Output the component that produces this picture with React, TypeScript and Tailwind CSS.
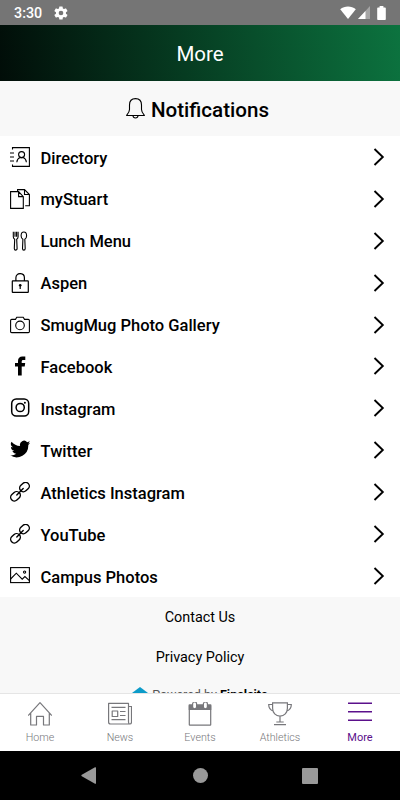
import React from 'react';

interface MenuItem {
  label: string;
  icon: React.ReactNode;
}

interface TabItem {
  label: string;
  icon: React.ReactNode;
  active?: boolean;
}

const LinkIcon = () => (
  <svg className="w-5 h-5" viewBox="0 0 20 20" fill="none" stroke="currentColor" strokeWidth={1.4} strokeLinecap="round">
    <rect x="-5.2" y="-3.7" width="10.4" height="7.4" rx="3.7" transform="translate(5.5 14.3) rotate(-42)" />
    <rect x="-5.2" y="-3.7" width="10.4" height="7.4" rx="3.7" transform="translate(14.5 5.1) rotate(-42)" />
    <path d="M6.8 12.9l6.4-6.4" />
  </svg>
);

const MENU_ITEMS: MenuItem[] = [
  {
    label: 'Directory',
    icon: (
      <svg className="w-5 h-5" viewBox="0 0 20 20" fill="none" stroke="currentColor" strokeWidth={1.1}>
        <path d="M2.5 2.5V.6h16.9v18.8H2.5v-2M0 6h4M0 10h4M0 14h4" />
        <circle cx="11.6" cy="7.6" r="3" />
        <path d="M6.8 15.3c.3-2.8 1.7-4.1 3.3-4.7h3c1.6.6 3 1.9 3.3 4.7" />
      </svg>
    ),
  },
  {
    label: 'myStuart',
    icon: (
      <svg className="w-5 h-5" viewBox="0 0 20 20" fill="none" stroke="currentColor" strokeWidth={1.1}>
        <path d="M.6 2.6h8l4.7 5v11.8H.6zM8.6 2.6v5h4.7M7.6 2.600V.6h6.900l4.900 4.900v11.300h-4.200M14.500.6v4.900h4.900" />
      </svg>
    ),
  },
  {
    label: 'Lunch Menu',
    icon: (
      <svg className="w-5 h-5" viewBox="0 0 20 20" fill="none" stroke="currentColor" strokeWidth={1.1}>
        <path d="M3.3.8v5c0 1.300.6 2 1.400 2.500l-.4 9.200c0 2.200 2.800 2.200 2.800 0l-.4-9.200c.8-.5 1.400-1.200 1.400-2.500v-5M5 .8v5M6.600.8v5" />
        <path d="M13.800 1c-1.700 0-2.700 1.800-2.700 3.800 0 1.700.8 3 1.800 3.500l-.4 9.200c0 2.200 2.700 2.200 2.700 0l-.4-9.200c1-.5 1.800-1.800 1.800-3.500 0-2-1.100-3.800-2.800-3.800z" />
      </svg>
    ),
  },
  {
    label: 'Aspen',
    icon: (
      <svg className="w-5 h-5" viewBox="0 0 20 20" fill="none" stroke="currentColor" strokeWidth={1.2}>
        <rect x="2.3" y="7.9" width="16" height="11.5" rx=".5" />
        <path d="M5.900 7.900V4.700c0-5.500 8.500-5.500 8.500 0v3.200" />
        <circle cx="10.200" cy="12.300" r="1.300" fill="currentColor" stroke="none" />
        <path d="M10.200 12.500v3.500" />
      </svg>
    ),
  },
  {
    label: 'SmugMug Photo Gallery',
    icon: (
      <svg className="w-5 h-5" viewBox="0 0 20 20" fill="none" stroke="currentColor" strokeWidth={1.1}>
        <path d="M1.700 4.400h3.800l1.300-2.200h6.400l1.300 2.200h3.800c.7 0 1.100.5 1.100 1.100v11c0 .7-.4 1.100-1.100 1.100H1.700c-.7 0-1.100-.4-1.100-1.100v-11c0-.6.4-1.100 1.100-1.100z" />
        <circle cx="10" cy="10.400" r="4.300" />
      </svg>
    ),
  },
  {
    label: 'Facebook',
    icon: (
      <svg className="w-5 h-5" viewBox="0 0 20 20" fill="currentColor">
        <path d="M8 19.400v-8.900H5V7.100h3V4.900C8 2.100 9.700.5 12.300.5h3v3.400h-2c-1.200 0-1.600.6-1.600 1.600v1.600h3.500l-.5 3.400h-3v8.900z" />
      </svg>
    ),
  },
  {
    label: 'Instagram',
    icon: (
      <svg className="w-5 h-5" viewBox="0 0 20 20" fill="none" stroke="currentColor" strokeWidth={1.5}>
        <rect x="1.700" y="1" width="17" height="17" rx="4.500" />
        <circle cx="10.200" cy="9.500" r="4.100" />
        <circle cx="14.900" cy="4.800" r="1" fill="currentColor" stroke="none" />
      </svg>
    ),
  },
  {
    label: 'Twitter',
    icon: (
      <svg className="w-5 h-5" viewBox="1.2 2 22 22" fill="currentColor">
        <path d="M23.6 5.1a9 9 0 0 1-2.6.7 4.6 4.6 0 0 0 2-2.5 9 9 0 0 1-2.9 1.1 4.5 4.5 0 0 0-7.8 4.1A12.9 12.9 0 0 1 2.9 3.8a4.5 4.5 0 0 0 1.4 6.1 4.5 4.5 0 0 1-2.1-.6 4.5 4.5 0 0 0 3.7 4.5 4.6 4.6 0 0 1-2.1.1 4.5 4.5 0 0 0 4.3 3.1A9.2 9.2 0 0 1 1.4 18.9a12.9 12.9 0 0 0 19.9-11.5 9 9 0 0 0 2.3-2.3z" />
      </svg>
    ),
  },
  { label: 'Athletics Instagram', icon: <LinkIcon /> },
  { label: 'YouTube', icon: <LinkIcon /> },
  {
    label: 'Campus Photos',
    icon: (
      <svg className="w-5 h-5" viewBox="0 0 20 20" fill="none" stroke="currentColor" strokeWidth={1.1}>
        <rect x=".6" y="1.6" width="18.8" height="15" />
        <path d="M.6 13l5.7-5.800 5.900 6 2.700-2.600 4.500 4" />
        <circle cx="14.600" cy="6.100" r="1.100" />
      </svg>
    ),
  },
];

const TABS: TabItem[] = [
  {
    label: 'Home',
    icon: (
      <svg className="w-6 h-6" viewBox="0 0 24 24" fill="none" stroke="currentColor" strokeWidth={1.2} strokeLinejoin="round" strokeLinecap="round">
        <path d="M.6 13.200L12 .7l11.400 12.500M2.700 11v12h5.800v-8.600h7V23h5.800V11" />
      </svg>
    ),
  },
  {
    label: 'News',
    icon: (
      <svg className="w-6 h-6" viewBox="0 0 24 24" fill="none" stroke="currentColor" strokeWidth={1.2} strokeLinejoin="round">
        <path d="M20.500 4.500h3v15.500c0 1.300-.7 2-1.600 2s-1.400-.7-1.400-2V1.400H.6V20c0 1.300.7 2 1.900 2h19.200" />
        <path d="M3.500 5.400h14M12 9.500h5.500M12 13.500h5.500M3.500 17.600h14" />
        <rect x="4.200" y="9" width="5.500" height="5.500" />
      </svg>
    ),
  },
  {
    label: 'Events',
    icon: (
      <svg className="w-6 h-6" viewBox="0 0 24 24" fill="none" stroke="currentColor" strokeWidth={1.2}>
        <rect x="1.300" y="3.200" width="21.400" height="20" rx=".5" />
        <path d="M1.300 3.200h21.400v4.200H1.300z" fill="currentColor" />
        <rect x="4.600" y="0" width="4" height="6.800" rx="2" fill="#fff" />
        <rect x="15.400" y="0" width="4" height="6.800" rx="2" fill="#fff" />
      </svg>
    ),
  },
  {
    label: 'Athletics',
    icon: (
      <svg className="w-6 h-6" viewBox="0 0 24 24" fill="none" stroke="currentColor" strokeWidth={1.2}>
        <path d="M4.600.8h14.800v5.500c0 4.500-3.100 7.800-7.400 7.800s-7.400-3.300-7.400-7.800zM4.600 2.500H.7c0 3.700 1.500 5.600 4.700 6.600M19.400 2.500h3.900c0 3.700-1.500 5.600-4.700 6.600M12 14.100V20M8.300 20h7.400M6 22.700h12" />
      </svg>
    ),
  },
  {
    label: 'More',
    active: true,
    icon: (
      <svg className="w-6 h-6" viewBox="0 0 24 24" fill="none" stroke="currentColor" strokeWidth={1.6}>
        <path d="M0 1.200h24M0 9.700h24M0 18.200h24" />
      </svg>
    ),
  },
];

const StatusBar = () => (
  <div className="flex h-[25px] shrink-0 items-center bg-[#757575] px-[14px] text-white">
    <span className="pt-[2px] text-[14.3px] font-medium leading-none">3:30</span>
    <svg className="ml-[11px] h-4 w-4" viewBox="0 0 24 24" fill="currentColor">
      <path d="M19.400 13a7.500 7.500 0 0 0 0-2l2.100-1.600c.2-.2.3-.4.1-.7l-2-3.400c-.1-.2-.4-.3-.6-.2l-2.500 1a7.300 7.300 0 0 0-1.700-1l-.4-2.600a.5.500 0 0 0-.5-.4h-4a.5.500 0 0 0-.5.400L9 5.100c-.6.3-1.200.6-1.700 1l-2.500-1c-.2-.1-.5 0-.6.200l-2 3.400c-.1.200-.1.500.1.700L4.500 11a7.500 7.500 0 0 0 0 2l-2.200 1.600c-.2.200-.2.400-.1.700l2 3.400c.1.200.4.300.6.200l2.500-1c.5.400 1.100.7 1.700 1l.4 2.600c0 .2.200.4.500.4h4c.3 0 .5-.2.5-.4l.4-2.600c.6-.3 1.200-.6 1.700-1l2.500 1c.2.100.5 0 .6-.2l2-3.400c.1-.2.1-.5-.1-.7zM12 15.500a3.500 3.500 0 1 1 0-7 3.500 3.500 0 0 1 0 7z" fillRule="evenodd" />
    </svg>
    <svg className="ml-auto h-[13px] w-4" viewBox="0 0 16 13" fill="currentColor">
      <path d="M8 13L.2 3.200C4.600-.5 11.400-.5 15.800 3.200z" />
    </svg>
    <svg className="ml-[1px] h-[13px] w-[14px]" viewBox="0 0 14 13" fill="currentColor">
      <path d="M1 13L13 0v13z" opacity=".35" />
      <path d="M1 13L8.500 4.900V13z" />
    </svg>
    <svg className="ml-[6px] h-[14px] w-[9px]" viewBox="0 0 9 14" fill="currentColor">
      <path d="M2.600 0h3.800v1.500H8c.5 0 .8.300.8.800v10.900c0 .5-.3.800-.8.800H1c-.5 0-.8-.3-.8-.8V2.300c0-.5.300-.8.800-.8h1.600z" />
    </svg>
  </div>
);

const App: React.FC = () => {
  return (
    <div className="flex h-[800px] w-[400px] flex-col overflow-hidden bg-white font-['Roboto',sans-serif] text-black">
      <StatusBar />

      <header className="flex h-14 shrink-0 items-center justify-center bg-linear-[82deg,#010d08,#0c733f] pt-[3px] text-[20.5px] text-white">
        More
      </header>

      <div className="flex h-[55px] shrink-0 items-center justify-center gap-[6px] bg-[#f8f8f8] pr-[5px] pt-[3px] text-[20.6px] font-medium">
        <svg className="mb-[3px] h-[21px] w-[19px]" viewBox="0 0 19 21" fill="none" stroke="currentColor" strokeWidth={1.1} strokeLinejoin="round">
          <path d="M9.500.6C5.600.6 3.500 3.400 3.500 7v4.500c0 2.600-1.200 4-2.900 6h17.800c-1.700-2-2.900-3.400-2.900-6V7c0-3.600-2.100-6.400-6-6.400z" />
          <path d="M7 17.700c.2 3 4.800 3 5 0" />
        </svg>
        <span>Notifications</span>
      </div>

      <ul className="flex h-[461px] shrink-0 flex-col">
        {MENU_ITEMS.map((item) => (
          <li key={item.label} className="flex flex-1 items-center pl-[10px] pr-[15px]">
            <span>{item.icon}</span>
            <span className="ml-[10.5px] pt-[4px] text-[16.5px] font-medium">{item.label}</span>
            <svg className="ml-auto h-[18px] w-3" viewBox="0 0 12 18" fill="none" stroke="currentColor" strokeWidth={1.9}>
              <path d="M1.500 1l8.300 8-8.300 8" />
            </svg>
          </li>
        ))}
      </ul>

      <footer className="flex h-24 shrink-0 flex-col items-center overflow-hidden bg-[#f8f8f8] text-[14.4px]">
        <span className="h-10 shrink-0 leading-[41px]">Contact Us</span>
        <span className="h-10 shrink-0 leading-[41px]">Privacy Policy</span>
        <div className="flex shrink-0 items-start pt-[7px]">
          <svg className="mt-[3px] h-4 w-4" viewBox="0 0 16 16" fill="#0c9bc9">
            <path d="M8 0l8 6v4l-8 6-8-6V6z" />
          </svg>
          <span className="ml-1 text-[12.5px] leading-[22px] text-[#555]">
            Powered by <b className="font-bold text-black">Finalsite</b>
          </span>
        </div>
      </footer>

      <nav className="grid h-[58px] shrink-0 grid-cols-5 border-t border-[#e5e5e5] bg-white">
        {TABS.map((tab) => (
          <div
            key={tab.label}
            className={`flex flex-col items-center pt-2 ${tab.active ? 'text-[#5b108b]' : 'text-[#77777b]'}`}
          >
            {tab.icon}
            <span className={`mt-[5px] leading-[14px] ${tab.active ? 'text-[11px]' : 'text-[10.7px] font-light'}`}>{tab.label}</span>
          </div>
        ))}
      </nav>

      <div className="flex h-[49px] shrink-0 items-center bg-black pl-[81px] text-[#999]">
        <svg className="h-[17px] w-[15px]" viewBox="0 0 15 17" fill="currentColor">
          <path d="M14 .3c.6-.3 1 0 1 .5v15.400c0 .5-.4.8-1 .5L.8 9.200c-.6-.4-.6-1 0-1.400z" />
        </svg>
        <div className="ml-[97px] h-[15px] w-[15px] rounded-full bg-[#999]" />
        <div className="ml-[94px] h-4 w-4 rounded-[1px] bg-[#999]" />
      </div>
    </div>
  );
};

export default App;
